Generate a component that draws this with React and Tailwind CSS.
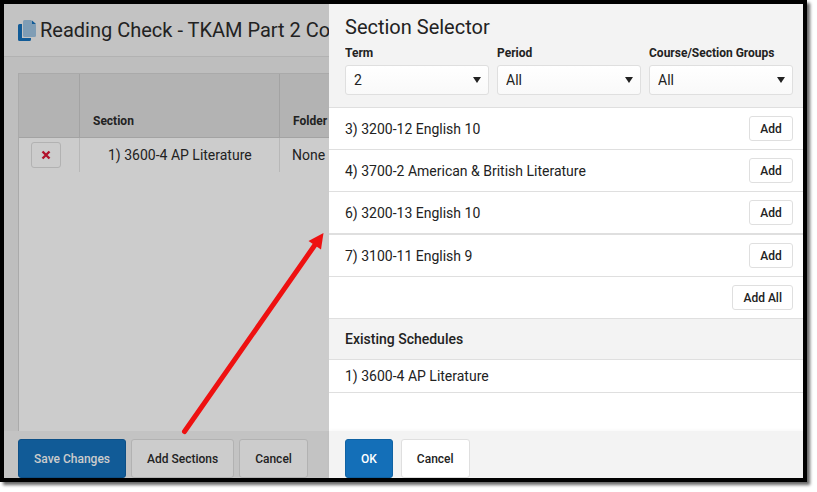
import { useState } from 'react';
import clsx from 'clsx';

const filters = [
  { id: 'term', label: 'Term', options: ['2', '1', '3', '4'] },
  { id: 'period', label: 'Period', options: ['All'] },
  { id: 'groups', label: 'Course/Section Groups', options: ['All'] },
];

const sections = [
  { id: 1, name: '3) 3200-12 English 10' },
  { id: 2, name: '4) 3700-2 American & British Literature' },
  { id: 3, name: '6) 3200-13 English 10', lastInGroup: true },
  { id: 4, name: '7) 3100-11 English 9' },
];

const CopyIcon = () => (
  <svg viewBox="0 0 18 21" className="h-[21px] w-[18px] shrink-0" aria-hidden="true">
    <path d="M0 5.500a1.500 1.500 0 0 1 1.500-1.500H4v14h9v1.500a1.500 1.500 0 0 1-1.500 1.500h-10A1.500 1.500 0 0 1 0 19.500z" fill="#115b97" />
    <path d="M6.500 0H13l5 4.500V15.500a1.500 1.500 0 0 1-1.500 1.500h-10A1.500 1.500 0 0 1 5 15.500v-14A1.500 1.500 0 0 1 6.500 0z" fill="#7f9db5" />
    <path d="M14 0.500l4 3.500h-4z" fill="#115b97" />
  </svg>
);

const RemoveIcon = () => (
  <svg viewBox="0 0 10 10" className="size-[10px]" aria-hidden="true">
    <path d="M1.500 1.500l7 7M8.500 1.500l-7 7" stroke="#b1122b" strokeWidth="2.400" fill="none" />
  </svg>
);

const FilterSelect = ({ id, label, options }) => {
  const [value, setValue] = useState(options[0]);

  return (
    <div className="flex min-w-0 flex-col gap-1">
      <label htmlFor={id} className="truncate text-xs font-bold">
        {label}
      </label>
      <div className="grid items-center">
        <select
          id={id}
          value={value}
          onChange={(e) => setValue(e.target.value)}
          className="col-start-1 row-start-1 h-[30px] w-full appearance-none rounded-[3px] border border-[#dfdfdf] bg-linear-to-b from-white to-[#f9f9f9] pr-6 pl-2 text-sm"
        >
          {options.map((option) => (
            <option key={option}>{option}</option>
          ))}
        </select>
        <svg
          viewBox="0 0 8 6"
          className="pointer-events-none col-start-1 row-start-1 mr-2 h-[6px] w-[8px] justify-self-end"
          aria-hidden="true"
        >
          <path d="M0 0h8L4 6z" fill="#222" />
        </svg>
      </div>
    </div>
  );
};

const SmallButton = ({ children }) => (
  <button type="button" className="h-[25px] min-w-11 rounded-[3px] border border-[#dfdfdf] bg-white px-[10px] text-xs font-medium">
    {children}
  </button>
);

const FooterButton = ({ className, children }) => (
  <button
    type="button"
    className={clsx('h-[39px] shrink-0 rounded-[3px] border px-[15px] text-xs font-medium whitespace-nowrap', className)}
  >
    {children}
  </button>
);

const Assignment = () => (
  <main className="flex min-w-0 flex-1 flex-col overflow-hidden bg-[#bebebe]">
    <header className="flex h-[53px] items-center gap-1 border-b border-[#b2b2b2] bg-[#c3c3c3] pl-[14px]">
      <CopyIcon />
      <h1 className="text-xl whitespace-nowrap">Reading Check - TKAM Part 2 Co</h1>
    </header>

    <div className="mt-4 ml-[14px] flex-1 border-t border-l border-[#aaaaaa] bg-[#cccccc]">
      <table className="w-full table-fixed border-separate border-spacing-0">
        <colgroup>
          <col className="w-[61px]" />
          <col className="w-[200px]" />
          <col />
        </colgroup>
        <thead>
          <tr className="h-16 bg-[#b3b3b3] text-left text-xs">
            <th className="border-r border-b border-[#a3a3a3]" aria-label="Remove" />
            <th className="border-r border-b border-[#a3a3a3] pb-2 pl-[13px] align-bottom font-bold">Section</th>
            <th className="border-b border-[#a3a3a3] pb-2 pl-[13px] align-bottom font-bold">Folder</th>
          </tr>
        </thead>
        <tbody>
          <tr className="h-[34px] text-sm">
            <td className="border-r border-[#b8b8b8] pl-3">
              <button
                type="button"
                aria-label="Remove section"
                className="flex h-[26px] w-[30px] items-center justify-center rounded-[3px] border border-[#b2b2b2]"
              >
                <RemoveIcon />
              </button>
            </td>
            <td className="border-r border-[#b8b8b8] pl-7">1) 3600-4 AP Literature</td>
            <td className="pl-3">None</td>
          </tr>
        </tbody>
      </table>
    </div>

    <footer className="flex h-[47px] shrink-0 items-end gap-[5px] bg-[#c3c3c3] pl-[14px]">
      <FooterButton className="border-[#0d4f86] bg-[#115b97] text-[#cccccc]">Save Changes</FooterButton>
      <FooterButton className="border-[#b2b2b2] bg-[#cccccc]">Add Sections</FooterButton>
      <FooterButton className="border-[#b2b2b2] bg-[#cccccc]">Cancel</FooterButton>
    </footer>
  </main>
);

const SectionSelector = () => (
  <aside className="flex w-[474px] shrink-0 flex-col bg-white">
    <div className="border-b border-[#dfdfdf] bg-[#f3f3f3] pt-[9px] pr-[10px] pb-3 pl-4">
      <h2 className="text-xl">Section Selector</h2>
      <div className="mt-1 grid grid-cols-3 gap-2">
        {filters.map((filter) => (
          <FilterSelect key={filter.id} {...filter} />
        ))}
      </div>
    </div>

    <ul>
      {sections.map((section) => (
        <li
          key={section.id}
          className={clsx(
            'flex items-center justify-between border-[#dfdfdf] py-2 pr-[10px] pl-4 text-sm',
            section.lastInGroup ? 'border-b-2' : 'border-b',
          )}
        >
          {section.name}
          <SmallButton>Add</SmallButton>
        </li>
      ))}
    </ul>
    <div className="flex justify-end border-b border-[#dfdfdf] py-2 pr-[10px]">
      <SmallButton>Add All</SmallButton>
    </div>

    <h3 className="border-b border-[#dfdfdf] bg-[#f3f3f3] py-[10px] pl-4 text-sm font-medium">Existing Schedules</h3>
    <p className="border-b border-[#dfdfdf] py-[6px] pl-4 text-sm">1) 3600-4 AP Literature</p>

    <footer className="mt-auto flex h-[47px] items-end gap-2 bg-[#f3f3f3] pl-4 shadow-[0_-1px_3px_rgba(0,0,0,0.03)]">
      <FooterButton className="border-[#0f62a3] bg-[#146fb8] text-white">OK</FooterButton>
      <FooterButton className="border-[#dfdfdf] bg-white">Cancel</FooterButton>
    </footer>
  </aside>
);

// Annotation arrow running from "Add Sections" to the side panel
const Arrow = () => (
  <svg
    viewBox="0 0 146 206"
    className="pointer-events-none absolute bottom-[42px] left-[176px] h-[206px] w-[146px]"
    aria-hidden="true"
  >
    <path d="M4.500 201.500L137 12" stroke="#ee1111" strokeWidth="5" strokeLinecap="round" fill="none" />
    <path d="M143.500 3l-15 8 12.500 8.500z" fill="#ee1111" />
  </svg>
);

const App = () => (
  <div className="h-screen bg-white pr-[10px] pb-[10px] font-[Roboto,sans-serif] text-[#222222]">
    <div className="relative flex h-full border-4 border-black shadow-[3px_3px_3px_rgba(0,0,0,0.6)]">
      <Assignment />
      <SectionSelector />
      <Arrow />
    </div>
  </div>
);

export default App;
